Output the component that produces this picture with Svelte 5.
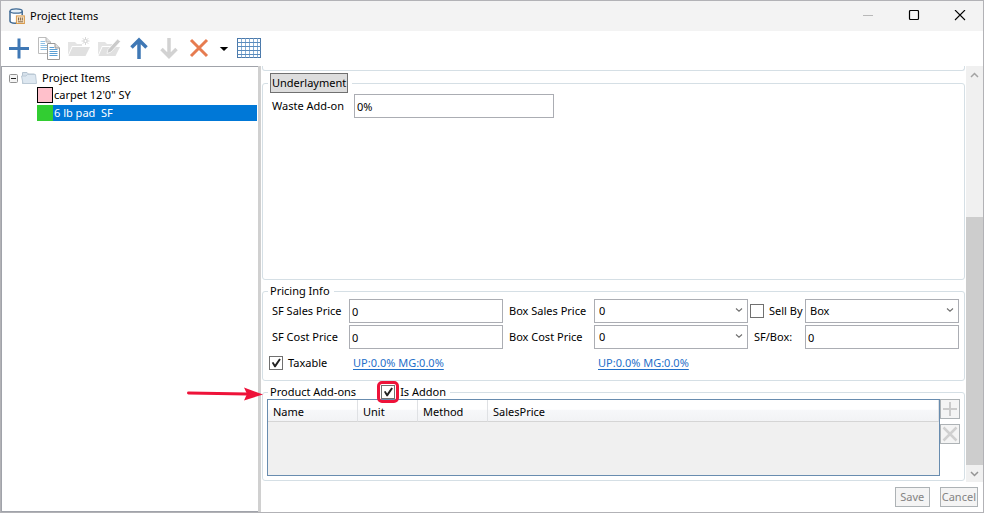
<script lang="ts">
	let taxable = $state(true);
	let sellByBox = $state(false);
	let isAddon = $state(true);
	let waste = $state('0%');
	let salesPrice = $state('0');
	let costPrice = $state('0');
	let perBox = $state('0');

	let selected = $state(1);
	const items = [
		{ name: 'carpet 12\'0" SY', swatch: 'pink' },
		{ name: '6 lb pad\u00a0 SF', swatch: 'green' }
	];
</script>

{#snippet chevron()}
	<svg class="chevron" viewBox="0 0 8 6" aria-hidden="true">
		<path d="M1 1.5 L4 4.2 L7 1.5" fill="none" stroke="#707070" stroke-width="1.1" />
	</svg>
{/snippet}

<div class="window">
	<header class="titlebar">
		<svg class="app-icon" viewBox="0 0 16 16" aria-hidden="true">
			<path d="M1 3 V13 C1 14.6 4 15.4 8 15.4 L8 9 L13 8 V3" fill="#fff" />
			<path d="M8 15.3 C3.5 15.3 1 14.4 1 13 V3 M13.2 3 V7" fill="none" stroke="#3f6a94" stroke-width="1.5" />
			<ellipse cx="7.1" cy="3" rx="6.1" ry="2.2" fill="#e6f0f8" stroke="#3f6a94" stroke-width="1.3" />
			<rect x="7.4" y="7.9" width="8" height="7.6" fill="#f8e3c4" stroke="#d89a4c" />
			<path d="M9.5 9.5 V12.5 M11.4 9.5 V12.5 M13.3 9.5 V12.5 M9 13.8 H14" stroke="#84684a" stroke-width="1" />
		</svg>
		<h1>Project Items</h1>
		<div class="controls">
			<button aria-label="Minimize" disabled>
				<svg viewBox="0 0 12 12"><path d="M1 5.5 H11" stroke="#b8b8b8" /></svg>
			</button>
			<button aria-label="Maximize">
				<svg viewBox="0 0 12 12"><rect x="1.5" y="0.5" width="9" height="9" rx="1" fill="none" stroke="#000" stroke-width="1.2" /></svg>
			</button>
			<button aria-label="Close">
				<svg viewBox="0 0 12 12"><path d="M1 0 L11 10 M11 0 L1 10" stroke="#000" stroke-width="1.1" /></svg>
			</button>
		</div>
	</header>

	<div class="toolbar" role="toolbar" aria-label="Project items">
		<button aria-label="Add">
			<svg viewBox="0 0 24 24"><path d="M12 1.5 V21.5 M2 11.5 H22" stroke="#3f78b5" stroke-width="3" /></svg>
		</button>
		<button aria-label="Copy">
			<svg viewBox="0 0 24 24">
				<path d="M1.5 0.5 H9 L13.5 5 V16.5 H1.5 Z" fill="#fff" stroke="#bcbcbc" />
				<path d="M9 0.5 V5 H13.5" fill="#ddd" stroke="#b4b4b4" />
				<path d="M3.5 4.5 H8 M3.5 6.5 H8 M3.5 8.5 H10 M3.5 10.5 H10 M3.5 12.5 H10" stroke="#8fc0e4" />
				<path d="M10.5 6.5 H18 L22.5 11 V22.5 H10.5 Z" fill="#fff" stroke="#9a9a9a" />
				<path d="M18 6.5 V11 H22.5" fill="#ddd" stroke="#9a9a9a" />
				<path d="M12.5 10.5 H17 M12.5 12.5 H20.5 M12.5 14.5 H20.5 M12.5 16.5 H20.5 M12.5 18.5 H20.5" stroke="#5b9fd4" />
			</svg>
		</button>
		<button aria-label="New folder" disabled>
			<svg viewBox="0 0 24 24">
				<path d="M1 18 V5 H8 L10 7 H15 V9 H5 Z" fill="#e4e4e4" />
				<path d="M5.5 10 H23 L18.5 19 H1.5 Z" fill="#e0e0e0" />
				<path d="M18.5 0 V8 M14.5 4 H22.5 M15.7 1.2 L21.3 6.8 M21.3 1.2 L15.7 6.8" stroke="#d8d8d8" />
				<circle cx="18.5" cy="4" r="1.6" fill="#fff" stroke="#d4d4d4" />
			</svg>
		</button>
		<button aria-label="Edit folder" disabled>
			<svg viewBox="0 0 24 24">
				<path d="M1 18 V5 H8 L10 7 H16 V9 H5 Z" fill="#e4e4e4" />
				<path d="M5.5 10 H23 L18.5 19 H1.5 Z" fill="#e0e0e0" />
				<path d="M10 16.5 L11 12.5 L20.5 2 L23.5 4.5 L14 15 Z" fill="#cacaca" stroke="#fff" stroke-width="0.7" />
			</svg>
		</button>
		<button aria-label="Move up">
			<svg viewBox="0 0 24 24"><path d="M12 22 V3 M4.5 10.5 L12 3 L19.5 10.5" fill="none" stroke="#3f78b5" stroke-width="3.5" /></svg>
		</button>
		<button aria-label="Move down" disabled>
			<svg viewBox="0 0 24 24"><path d="M12 1 V19 M4.5 12 L12 19.5 L19.5 12" fill="none" stroke="#d2d2d2" stroke-width="3.5" /></svg>
		</button>
		<button aria-label="Delete">
			<svg viewBox="0 0 24 24"><path d="M4 3 L20 19 M20 3 L4 19" stroke="#e67c50" stroke-width="3" /></svg>
		</button>
		<button class="drop" aria-label="More delete options">
			<svg viewBox="0 0 24 24"><path d="M7 9.5 H17 L12 14.5 Z" fill="#000" /></svg>
		</button>
		<button aria-label="Grid view">
			<svg viewBox="0 0 24 24">
				<rect x="0.5" y="1.5" width="23" height="19" fill="#fff" stroke="#4b79aa" />
				<path d="M4.5 1.5 V20.5 M8.5 1.5 V20.5 M12.5 1.5 V20.5 M16.5 1.5 V20.5 M20.5 1.5 V20.5" stroke="#86afd6" />
				<path d="M0.5 5.5 H23.5 M0.5 9.5 H23.5 M0.5 13.5 H23.5 M0.5 17.5 H23.5" stroke="#5b8cbd" />
			</svg>
		</button>
	</div>

	<main>
		<nav class="tree">
			<div class="root">
				<svg class="expander" viewBox="0 0 9 9" aria-hidden="true">
					<rect x="0.5" y="0.5" width="8" height="8" rx="1" fill="#f4f4f4" stroke="#919191" />
					<path d="M2 4.5 H7" stroke="#222" />
				</svg>
				<svg class="folder" viewBox="0 0 16 14" aria-hidden="true">
					<path d="M1.5 1.5 H6 L7.5 3 H13.5 V12.5 H1.5 Z" fill="#d5e0ea" stroke="#b4c2cf" />
					<path d="M0.5 5 L5 5 L6.5 3.5 H14.5 L15.5 12.5 H2 Z" fill="#dde7f0" stroke="#bccad6" />
				</svg>
				<span>Project Items</span>
			</div>
			<ul>
				{#each items as item, i}
					<li>
						<button class:selected={selected === i} onclick={() => (selected = i)}>
							<span class="swatch {item.swatch}"></span>
							<span class="name">{item.name}</span>
						</button>
					</li>
				{/each}
			</ul>
		</nav>
		<div class="splitter"></div>

		<section class="details">
			<div class="scroller">
				<div class="content">
					<div class="previous"></div>

					<fieldset class="underlayment">
						<legend><button class="tab">Underlayment</button></legend>
						<div class="waste">
							<label for="waste">Waste Add-on</label>
							<div class="waste-value">
								<input id="waste" type="text" bind:value={waste} />
							</div>
						</div>
					</fieldset>

					<fieldset class="pricing">
						<legend>Pricing Info</legend>
						<div class="grid">
							<label for="sf-sales">SF Sales Price</label>
							<input id="sf-sales" type="text" bind:value={salesPrice} />
							<label class="wide" for="box-sales">Box Sales Price</label>
							<div class="combo">
								<select id="box-sales"><option>0</option></select>
								{@render chevron()}
							</div>
							<label class="check"><input type="checkbox" bind:checked={sellByBox} />Sell By</label>
							<div class="combo">
								<select aria-label="Sell by unit"><option>Box</option></select>
								{@render chevron()}
							</div>

							<label for="sf-cost">SF Cost Price</label>
							<input id="sf-cost" type="text" bind:value={costPrice} />
							<label class="wide" for="box-cost">Box Cost Price</label>
							<div class="combo">
								<select id="box-cost"><option>0</option></select>
								{@render chevron()}
							</div>
							<label class="wide" for="per-box">SF/Box:</label>
							<input id="per-box" type="text" bind:value={perBox} />

							<label class="check taxable"><input type="checkbox" bind:checked={taxable} />Taxable</label>
							<a href="#sf-margin">UP:0.0% MG:0.0%</a>
							<a class="box-margin" href="#box-margin">UP:0.0% MG:0.0%</a>
						</div>
					</fieldset>

					<fieldset class="addons">
						<legend>
							<span>Product Add-ons</span>
							<label class="check">
								<input type="checkbox" bind:checked={isAddon} />Is Addon
								<span class="highlight"></span>
							</label>
						</legend>
						<svg class="pointer" viewBox="0 0 76 14" aria-hidden="true">
							<path d="M1.5 6 L60 7" stroke="#ee1239" stroke-width="3" stroke-linecap="round" />
							<path d="M57 0.5 L76 7.5 L57 13.5 L60 7 Z" fill="#ee1239" />
						</svg>
						<div class="addon-body">
							<div class="table-box">
								<table>
									<colgroup>
										<col class="c-name" />
										<col class="c-unit" />
										<col class="c-method" />
										<col />
									</colgroup>
									<thead>
										<tr>
											<th>Name</th>
											<th>Unit</th>
											<th>Method</th>
											<th>SalesPrice</th>
										</tr>
									</thead>
									<tbody></tbody>
								</table>
							</div>
							<div class="side">
								<button aria-label="Add row" disabled>
									<svg viewBox="0 0 18 18"><path d="M9 2 V16 M2 9 H16" stroke="#cbcbcb" stroke-width="2" /></svg>
								</button>
								<button aria-label="Remove row" disabled>
									<svg viewBox="0 0 18 18"><path d="M2.5 2.5 L15.5 15.5 M15.5 2.5 L2.5 15.5" stroke="#d0d0d0" stroke-width="2.5" /></svg>
								</button>
							</div>
						</div>
					</fieldset>
				</div>
				<div class="scrollbar" aria-hidden="true">
					<svg viewBox="0 0 17 17"><path d="M5 11 L8.5 7.5 L12 11" fill="none" stroke="#a3a3a3" stroke-width="1.5" /></svg>
					<div class="track"></div>
					<div class="thumb"></div>
					<svg viewBox="0 0 17 17"><path d="M5 7 L8.5 10.5 L12 7" fill="none" stroke="#949494" stroke-width="1.5" /></svg>
				</div>
			</div>
			<footer>
				<button disabled>Save</button>
				<button disabled>Cancel</button>
			</footer>
		</section>
	</main>
</div>

<style>
	:global(body) {
		margin: 0;
	}

	.window,
	.window * {
		box-sizing: border-box;
	}

	.window {
		display: flex;
		flex-direction: column;
		min-height: 100vh;
		border: 1px solid #b2b2b6;
		background: #fff;
		color: #000;
		font: 11px/16px 'Noto Sans', 'Open Sans', sans-serif;
	}

	button,
	input,
	select {
		margin: 0;
		font: inherit;
		color: inherit;
	}

	svg {
		display: block;
	}

	.titlebar {
		display: flex;
		align-items: center;
		height: 30px;
		padding-left: 8px;
		background: #f3f3f3;
	}

	.app-icon {
		width: 16px;
		height: 16px;
	}

	h1 {
		margin: 0 0 0 5px;
		font-size: 11px;
		font-weight: 400;
	}

	.controls {
		display: flex;
		height: 100%;
		margin-left: auto;
	}

	.controls button {
		display: grid;
		place-items: center;
		width: 46px;
		padding: 0;
		border: 0;
		background: none;
	}

	.controls svg {
		width: 12px;
		height: 12px;
	}

	.toolbar {
		display: flex;
		align-items: center;
		height: 35px;
		padding-left: 3px;
	}

	.toolbar button {
		width: 30px;
		padding: 0 3px;
		border: 0;
		background: none;
	}

	.toolbar .drop {
		width: 20px;
		padding: 0;
	}

	.toolbar svg {
		width: 24px;
		height: 24px;
	}

	.toolbar .drop svg {
		width: 20px;
	}

	main {
		display: flex;
		flex: 1;
	}

	.tree {
		width: 257px;
		padding: 2px 0;
		border: 1px solid #a0a3aa;
		border-right: 0;
	}

	.root {
		display: flex;
		align-items: center;
		height: 18px;
		padding-left: 7px;
	}

	.expander {
		width: 9px;
		height: 9px;
		margin-right: 3px;
	}

	.folder {
		width: 16px;
		height: 14px;
		margin-right: 5px;
	}

	ul {
		margin: 0;
		padding: 0 0 0 35px;
		list-style: none;
	}

	li button {
		display: flex;
		align-items: flex-start;
		width: 100%;
		height: 18px;
		padding: 0 1px 0 0;
		border: 0;
		background: none;
		text-align: left;
	}

	.swatch {
		width: 16px;
		height: 16px;
	}

	.pink {
		border: 1px solid #000;
		background: #ffc0cb;
	}

	.green {
		background: #32cd32;
	}

	.name {
		flex: 1;
		padding-left: 1px;
		white-space: pre;
	}

	.selected .name {
		background: #0078d7;
		color: #fff;
	}

	.splitter {
		width: 3px;
		background: #d0d0d0;
	}

	.details {
		display: flex;
		flex: 1;
		flex-direction: column;
	}

	.scroller {
		display: flex;
		flex: 1;
	}

	.content {
		display: flex;
		flex: 1;
		flex-direction: column;
		padding: 0 1px 1px;
	}

	.previous {
		height: 5px;
		margin-bottom: 2px;
		border: 1px solid #d5dfe5;
		border-top: 0;
		border-radius: 0 0 3px 3px;
	}

	fieldset {
		min-width: 0;
		margin: 0;
		border: 1px solid #d5dfe5;
		border-radius: 3px;
	}

	legend {
		padding: 0 4px 0 2px;
		line-height: 14px;
	}

	.underlayment {
		flex: 1;
		margin-bottom: 4px;
		padding: 1px 5px;
	}

	.tab {
		display: block;
		height: 20px;
		padding: 0 1px;
		border: 1px solid #707070;
		background: #ddd;
		line-height: 18px;
	}

	.waste {
		display: flex;
		align-items: center;
		padding-left: 4px;
	}

	.waste label {
		width: 82px;
	}

	.waste-value {
		width: 200px;
	}

	input[type='text'],
	select {
		width: 100%;
		height: 24px;
		padding: 0 2px;
		border: 1px solid #abadb3;
		border-radius: 0;
		background: #fff;
		outline: 0;
	}

	select {
		display: block;
		padding: 0 4px;
		appearance: none;
	}

	.combo {
		position: relative;
	}

	.chevron {
		position: absolute;
		top: 8px;
		right: 5px;
		width: 8px;
		height: 6px;
		pointer-events: none;
	}

	.pricing {
		margin-bottom: 4px;
		padding: 1px 5px 5px 6px;
	}

	.pricing legend {
		margin-left: -1px;
	}

	.grid {
		display: grid;
		grid-template-columns: 80px 1fr 91px 1fr 57px 1fr;
		grid-auto-rows: 24px;
		row-gap: 2px;
		align-items: center;
	}

	.grid label {
		padding-left: 3px;
		white-space: nowrap;
	}

	.grid .wide {
		padding-left: 6px;
	}

	.check {
		display: flex;
		align-items: center;
		gap: 5px;
	}

	.grid .check {
		padding-left: 2px;
	}

	.grid .taxable {
		padding-left: 0;
	}

	input[type='checkbox'] {
		flex: none;
		width: 14px;
		height: 14px;
		border: 1px solid #707070;
		background: #fff;
		appearance: none;
	}

	input[type='checkbox']:checked {
		display: grid;
		place-items: center;
	}

	input[type='checkbox']:checked::before {
		content: '';
		width: 10px;
		height: 10px;
		background: #212121;
		clip-path: polygon(8% 48%, 24% 40%, 40% 64%, 82% 6%, 98% 14%, 46% 92%, 34% 92%);
	}

	a {
		padding-left: 4px;
		color: #1f6fc9;
		text-underline-offset: 2px;
	}

	.box-margin {
		grid-column: 4;
	}

	.addons {
		position: relative;
		padding: 0 4px 4px;
	}

	.addons legend {
		display: flex;
		gap: 25px;
		margin-left: 1px;
	}

	.addons .check {
		position: relative;
	}

	.highlight {
		position: absolute;
		top: -4px;
		left: -4px;
		width: 22px;
		height: 22px;
		border: 3px solid #ee1239;
		border-radius: 5px;
	}

	.pointer {
		position: absolute;
		top: -12px;
		right: 100%;
		width: 76px;
		height: 14px;
	}

	.addon-body {
		display: flex;
	}

	.table-box {
		flex: 1;
		min-height: 77px;
		border: 1px solid #688caf;
		background: #f0f0f0;
	}

	table {
		width: 100%;
		border-spacing: 0;
		table-layout: fixed;
	}

	.c-name {
		width: 90px;
	}

	.c-unit {
		width: 60px;
	}

	.c-method {
		width: 70px;
	}

	th {
		height: 22px;
		padding: 3px 4px 0 5px;
		border-right: 1px solid #dfe1e4;
		border-bottom: 1px solid #d5d5d5;
		background: linear-gradient(#fff 45%, #f7f8fa 46%, #f2f3f5);
		font-weight: 400;
		text-align: left;
	}

	.side {
		display: flex;
		flex-direction: column;
		gap: 5px;
	}

	.side button {
		width: 20px;
		height: 20px;
		padding: 0;
		border: 1px solid #adb2b5;
		background: #f4f4f4;
	}

	.scrollbar {
		display: flex;
		flex-direction: column;
		width: 17px;
		background: #f0f0f0;
	}

	.scrollbar svg {
		width: 17px;
		height: 17px;
	}

	.track {
		flex: 134;
	}

	.thumb {
		flex: 248;
		background: #cdcdcd;
	}

	footer {
		display: flex;
		gap: 10px;
		justify-content: flex-end;
		height: 30px;
		padding: 5px 5px 0 0;
	}

	footer button {
		height: 20px;
		min-width: 35px;
		padding: 0 1px;
		border: 1px solid #adb2b5;
		background: #f4f4f4;
		color: #838383;
	}
</style>
